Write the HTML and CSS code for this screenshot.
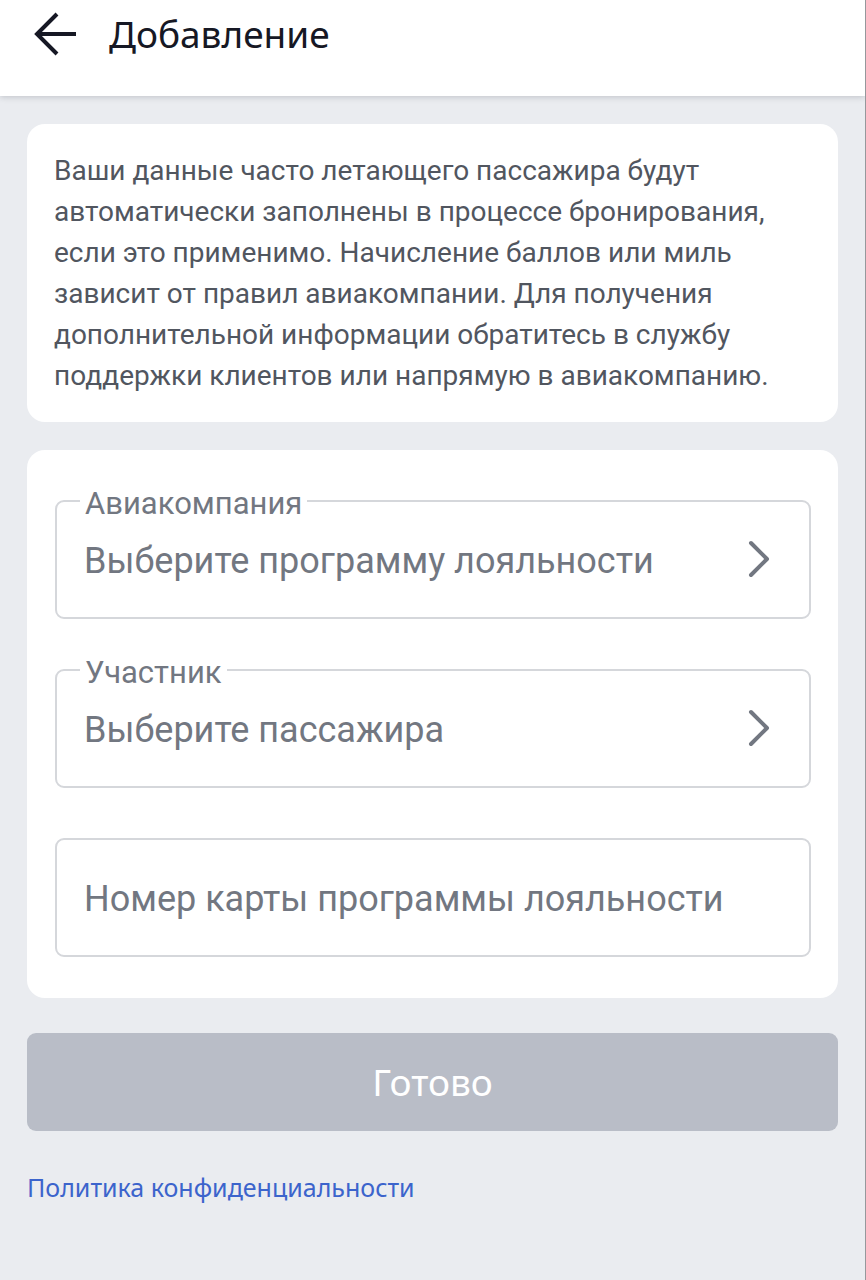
FILE: index.html
```html
<!DOCTYPE html>
<html lang="ru">
<head>
<meta charset="utf-8">
<meta name="viewport" content="width=device-width, initial-scale=1">
<title>Добавление</title>
<link rel="stylesheet" href="styles.css">
</head>
<body>
<header class="header">
  <button class="back" type="button" aria-label="Назад">
    <svg width="44" height="44" viewBox="0 0 44 44" fill="none" stroke="currentColor" stroke-width="4" aria-hidden="true">
      <path d="M24 2 4 22l20 20M3 22h40"/>
    </svg>
  </button>
  <h1 class="title">Добавление</h1>
</header>
<main class="content">
  <section class="card note">
    <p class="note-text">Ваши данные часто летающего пассажира будут автоматически заполнены в процессе бронирования, если это применимо. Начисление баллов или миль зависит от правил авиакомпании. Для получения дополнительной информации обратитесь в службу поддержки клиентов или напрямую в авиакомпанию.</p>
  </section>
  <form class="form">
    <div class="card fields">
      <div class="field">
        <label class="field-label" for="airline">Авиакомпания</label>
        <button class="field-control" id="airline" type="button">
          <span>Выберите программу лояльности</span>
          <svg class="chevron" width="24" height="38" viewBox="0 0 24 38" aria-hidden="true"><path d="m4 1 16 16L4 33"/></svg>
        </button>
      </div>
      <div class="field">
        <label class="field-label" for="member">Участник</label>
        <button class="field-control" id="member" type="button">
          <span>Выберите пассажира</span>
          <svg class="chevron" width="24" height="38" viewBox="0 0 24 38" aria-hidden="true"><path d="m4 1 16 16L4 33"/></svg>
        </button>
      </div>
      <div class="field">
        <input class="field-control" type="text" aria-label="Номер карты программы лояльности" placeholder="Номер карты программы лояльности">
      </div>
    </div>
    <button class="submit" type="submit" disabled>Готово</button>
  </form>
  <a class="policy" href="#privacy">Политика конфиденциальности</a>
</main>
</body>
</html>
```
FILE: styles.css
```css
* {
  box-sizing: border-box;
}

body {
  margin: 0;
  min-height: 100vh;
  border-right: 1px solid #96989c;
  background: #eaecf0;
  color: #51565f;
  font-family: Roboto, "Noto Sans", sans-serif;
}

button,
input {
  font: inherit;
}

.header {
  display: flex;
  align-items: center;
  gap: 32px;
  padding: 10px 33px 38px;
  background: #fff;
  box-shadow: 0 1px 6px rgba(40, 44, 60, 0.22);
}

.back {
  display: flex;
  padding: 0;
  border: 0;
  background: none;
  color: #161824;
}

.title {
  margin: 0;
  color: #161824;
  font-family: "Noto Sans", sans-serif;
  font-size: 37px;
  font-weight: 400;
  line-height: 48px;
}

.content {
  padding: 28px 27px;
}

.card {
  border-radius: 18px;
  background: #fff;
}

.note {
  margin-bottom: 28px;
  padding: 26px 27px;
}

.note-text {
  margin: 0;
  font-size: 28px;
  line-height: 41px;
}

.fields {
  display: grid;
  gap: 50px;
  padding: 50px 27px 41px 28px;
}

.field {
  position: relative;
}

.field-label {
  position: absolute;
  top: -16px;
  left: 25px;
  padding: 0 5px;
  background: #fff;
  color: #727781;
  font-size: 31px;
  line-height: 40px;
}

.field-control {
  display: flex;
  align-items: center;
  justify-content: space-between;
  width: 100%;
  height: 119px;
  padding: 2px 38px 0 27px;
  border: 2px solid #d5d7db;
  border-radius: 9px;
  background: #fff;
  color: #727781;
  font-size: 36px;
  text-align: left;
}

.field-control::placeholder {
  color: #727781;
  opacity: 1;
}

.chevron {
  overflow: visible;
  fill: none;
  stroke: #727781;
  stroke-width: 4;
  stroke-linecap: round;
  stroke-linejoin: round;
}

.submit {
  display: block;
  width: 100%;
  margin-top: 35px;
  padding: 24px;
  border: 0;
  border-radius: 9px;
  background: #b9bdc7;
  color: #fff;
  font-family: "Noto Sans", sans-serif;
  font-size: 37px;
  line-height: 50px;
}

.policy {
  display: inline-block;
  margin-top: 38px;
  color: #3c64cc;
  font-family: "Noto Sans", sans-serif;
  font-size: 25px;
  line-height: 36px;
  text-decoration: none;
}
```
